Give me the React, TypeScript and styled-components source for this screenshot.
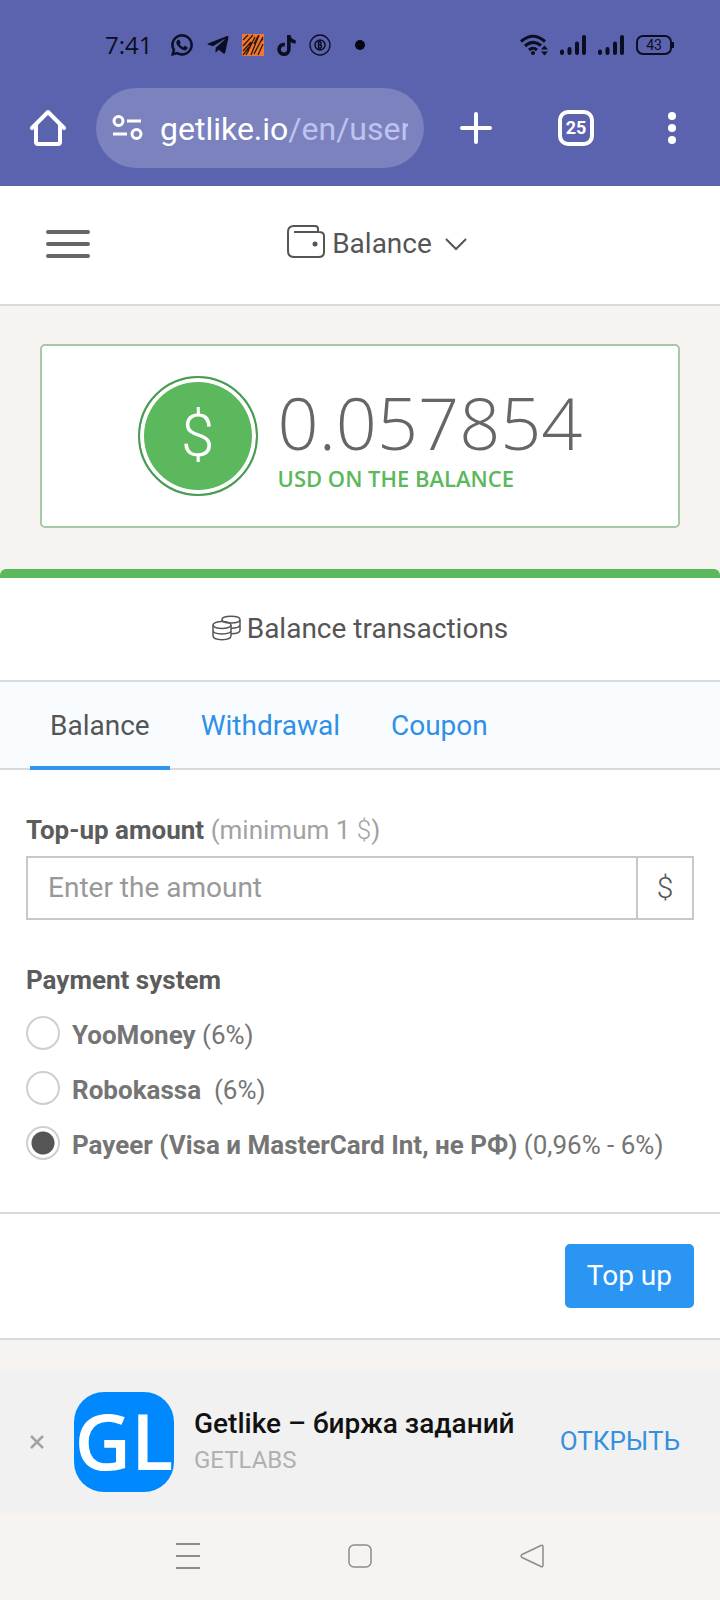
import React, { useState } from "react";
import styled, { createGlobalStyle, css } from "styled-components";
import { FaWhatsapp, FaTelegramPlane, FaTiktok } from "react-icons/fa";

const GlobalStyle = createGlobalStyle`
  *, *::before, *::after { box-sizing: border-box; }
  body {
    margin: 0;
    background: #f6f3f0;
    color: #555;
    font-family: Roboto, "Liberation Sans", sans-serif;
    font-size: 28px;
    line-height: 32px;
  }
  button, input { font: inherit; color: inherit; }
  svg { display: block; flex: none; }
`;

const PlainButton = styled.button`
  display: flex;
  align-items: center;
  justify-content: center;
  padding: 0;
  border: 0;
  background: none;
  cursor: pointer;
`;

/* Phone and browser chrome */

const Chrome = styled.div`
  background: #5b63ae;
`;

const StatusBar = styled.div`
  display: flex;
  align-items: center;
  justify-content: space-between;
  height: 88px;
  padding: 2px 46px 0 105px;
  color: #0b0d20;
`;

const StatusGroup = styled.div<{ $gap: number }>`
  display: flex;
  align-items: center;
  gap: ${(p) => p.$gap}px;
`;

const Clock = styled.time`
  margin-right: 6px;
  font-family: "Open Sans", sans-serif;
  font-size: 24px;
`;

const StatusDot = styled.span`
  width: 10px;
  height: 10px;
  margin-left: 12px;
  border-radius: 50%;
  background: #06070f;
`;

const Battery = styled.div`
  position: relative;
  width: 36px;
  height: 20px;
  margin-right: 2px;
  border: 2px solid #0b0d20;
  border-radius: 7px;
  font-size: 14px;
  line-height: 16px;
  text-align: center;

  &::after {
    content: "";
    position: absolute;
    top: 5px;
    right: -4px;
    width: 2px;
    height: 6px;
    background: #0b0d20;
  }
`;

const Toolbar = styled.div`
  display: flex;
  align-items: center;
  padding: 0 36px 18px 30px;
  color: #fff;
`;

const AddressPill = styled.div`
  display: flex;
  flex: 1;
  align-items: center;
  gap: 17px;
  min-width: 0;
  height: 80px;
  margin: 0 36px 0 30px;
  padding: 0 16px;
  border-radius: 40px;
  background: #7c82be;
`;

const Address = styled.div`
  flex: 1;
  padding-top: 2px;
  overflow: hidden;
  font-size: 32px;
  line-height: 40px;
  white-space: nowrap;
`;

const AddressPath = styled.span`
  color: #bfc3ef;
`;

const ToolbarActions = styled.div`
  display: flex;
  align-items: center;
  gap: 66px;
`;

const TabCount = styled(PlainButton)`
  width: 36px;
  height: 36px;
  border: 4px solid #fff;
  border-radius: 10px;
  color: #fff;
  font-size: 18px;
  font-weight: 700;
  line-height: 20px;
`;

/* Page */

const PageHeader = styled.header`
  display: flex;
  align-items: center;
  height: 120px;
  padding: 0 56px 2px 46px;
  border-bottom: 2px solid #dcdad8;
  background: #fff;
`;

const SectionPicker = styled(PlainButton)`
  gap: 7px;
  margin: 0 auto;
`;

const ChevronSlot = styled.span`
  padding-left: 6px;
`;

const BalanceArea = styled.section`
  padding: 38px 40px 41px;
`;

const BalanceCard = styled.div`
  display: flex;
  align-items: center;
  justify-content: center;
  gap: 20px;
  height: 184px;
  border: 2px solid #a3c9a5;
  border-radius: 5px;
  background: #fff;
`;

const Coin = styled.div`
  display: grid;
  place-items: center;
  width: 120px;
  height: 120px;
  border: 2px solid #4b9a56;
  border-radius: 50%;
  background: #5cb85c;
  box-shadow: inset 0 0 0 4px #fff;
  color: #fff;
  font-size: 60px;
  font-weight: 300;
  line-height: 60px;
`;

const BalanceFigures = styled.div`
  padding-top: 8px;
  font-family: "Open Sans", "Noto Sans", sans-serif;
`;

const Amount = styled.div`
  color: #666;
  font-size: 72px;
  font-weight: 300;
  line-height: 72px;
`;

const AmountCaption = styled.div`
  padding-top: 4px;
  color: #5cb85c;
  font-size: 22px;
  font-weight: 600;
  line-height: 32px;
`;

const Panel = styled.main`
  border-top: 9px solid #5cb85c;
  border-radius: 6px 6px 0 0;
  background: #fff;
`;

const PanelTitle = styled.h1`
  display: flex;
  align-items: center;
  justify-content: center;
  gap: 6px;
  height: 104px;
  margin: 0;
  border-bottom: 2px solid #dadada;
  font-size: 28px;
  font-weight: 400;
`;

const Tabs = styled.nav`
  display: flex;
  gap: 11px;
  height: 88px;
  padding: 0 30px;
  border-bottom: 2px solid #d8dadb;
  background: #f9fcff;
`;

const Tab = styled.a<{ $active?: boolean }>`
  height: 88px;
  padding: 0 20px;
  color: #2f90e6;
  line-height: 88px;
  text-decoration: none;
  ${(p) =>
    p.$active &&
    css`
      border-bottom: 4px solid #3095ec;
      color: #555;
    `}
`;

const Form = styled.form`
  margin: 0;
`;

const Fields = styled.div`
  padding: 44px 26px 52px;
  border-bottom: 2px solid #dadada;
  font-size: 26px;
`;

const FieldLabel = styled.label`
  display: block;
  margin-bottom: 10px;
  color: #5c5c5c;
  font-weight: 700;
`;

const Hint = styled.span`
  color: #a2a2a2;
  font-weight: 400;
`;

const Currency = styled.span`
  font-weight: 300;
`;

const InputGroup = styled.div`
  display: flex;
  height: 64px;
  border: 2px solid #c8c8c8;
  font-size: 28px;
`;

const AmountInput = styled.input`
  flex: 1;
  min-width: 0;
  padding: 0 20px;
  border: 0;
  outline: 0;
  background: none;

  &::placeholder {
    color: #999;
    opacity: 1;
  }
`;

const InputSuffix = styled.span`
  display: grid;
  place-items: center;
  width: 56px;
  border-left: 2px solid #c8c8c8;
  font-size: 30px;
  font-weight: 300;
`;

const RadioGroup = styled.fieldset`
  display: flex;
  flex-direction: column;
  gap: 21px;
  margin: 0;
  padding: 45px 0 0;
  border: 0;
`;

const Legend = styled.legend`
  float: left;
  padding: 0;
  color: #5c5c5c;
  font-weight: 700;
  line-height: 30px;
`;

const RadioRow = styled.label`
  display: flex;
  align-items: center;
  gap: 12px;
  height: 34px;
  color: #757575;
  font-size: 26px;
  white-space: pre;
`;

const Radio = styled.input`
  flex: none;
  appearance: none;
  width: 34px;
  height: 34px;
  margin: 0;
  border: 2px solid #cfcfcf;
  border-radius: 50%;
  background: #fff;

  &:checked {
    background: radial-gradient(circle, #555 0 11px, #fff 12px);
  }
`;

const RadioText = styled.span`
  padding-top: 4px;
`;

const FormActions = styled.div`
  display: flex;
  justify-content: flex-end;
  padding: 30px 26px;
  border-bottom: 2px solid #dadada;
`;

const SubmitButton = styled.button`
  height: 64px;
  padding: 0 22px;
  border: 0;
  border-radius: 5px;
  background: #2b95f3;
  color: #fff;
  cursor: pointer;
`;

/* App install banner */

const Banner = styled.aside`
  display: flex;
  align-items: center;
  height: 142px;
  margin-top: 31px;
  padding: 0 40px 0 30px;
  background: #f1f1f1;
`;

const AppIcon = styled.div`
  display: flex;
  align-items: center;
  justify-content: center;
  width: 100px;
  height: 100px;
  margin: 0 20px 0 30px;
  border-radius: 30px;
  background: #0088ff;
  color: #fff;
  font-family: "Open Sans", "Noto Sans", sans-serif;
  font-size: 78px;
  font-weight: 600;
  line-height: 96px;
  padding-bottom: 4px;
`;

const AppInfo = styled.div`
  flex: 1;
  min-width: 0;
`;

const AppName = styled.div`
  color: #111;
  font-size: 28px;
  font-weight: 500;
  line-height: 36px;
`;

const AppVendor = styled.div`
  color: #b0b0b0;
  font-size: 24px;
  line-height: 36px;
`;

const OpenLink = styled.a`
  padding-bottom: 2px;
  color: #3490e0;
  font-size: 26px;
  text-decoration: none;
`;

const SystemNav = styled.nav`
  display: flex;
  justify-content: center;
  gap: 148px;
  height: 86px;
  color: #8f8b88;
`;

const Signal = () => (
  <svg width="26" height="22" viewBox="0 0 26 22" stroke="currentColor" strokeWidth="4" strokeLinecap="round">
    <path d="M2 17.500V19M9.500 15V19M17 9.500V19M24 3V19" />
  </svg>
);

const methods = [
  { id: "yoomoney", name: "YooMoney", fee: " (6%)" },
  { id: "robokassa", name: "Robokassa", fee: "  (6%)" },
  { id: "payeer", name: "Payeer (Visa и MasterCard Int, не РФ)", fee: " (0,96% - 6%)" },
];

export default function App() {
  const [method, setMethod] = useState("payeer");
  const [amount, setAmount] = useState("");

  return (
    <>
      <GlobalStyle />
      <Chrome>
        <StatusBar>
          <StatusGroup $gap={12}>
            <Clock>7:41</Clock>
            <FaWhatsapp size={24} stroke="currentColor" strokeWidth={16} />
            <FaTelegramPlane size={24} />
            <svg width="22" height="22" viewBox="0 0 22 22">
              <rect width="22" height="22" fill="#ee7a31" />
              <path
                d="M1 6L6 1M1 12L11 1M1 17L9 8L6 18M4 21L13 3M9 21L17 1M12 20L21 3M16 21L21 10M12 10L16 2M1 21L7 13M18 8L21 5"
                stroke="#351509"
                strokeWidth="1.300"
                fill="none"
              />
            </svg>
            <FaTiktok size={21} />
            <svg width="22" height="22" viewBox="0 0 22 22" fill="none" stroke="currentColor">
              <circle cx="11" cy="11" r="10" strokeWidth="1.300" />
              <circle cx="11" cy="11" r="5" strokeWidth="1.500" />
              <path d="M9.500 8H11.500Q13 9.500 11 11Q14 12 11.500 14H9.500ZM9.500 11H12M11 6V8M11 14V16" strokeWidth="1.400" />
            </svg>
            <StatusDot />
          </StatusGroup>
          <StatusGroup $gap={12}>
            <svg width="28" height="22" viewBox="0 0 28 22" fill="none" stroke="currentColor" strokeWidth="3">
              <path d="M1 7.500Q13 -3 25 7.500M5 12Q13 5 21 11.500M9 16Q13 12.500 17 16" />
              <circle cx="13" cy="19" r="2" fill="currentColor" stroke="none" />
              <path d="M21 15.500L24.500 11.500L28 15.500ZM21 17.500L24.500 21.500L28 17.500Z" fill="currentColor" stroke="none" />
            </svg>
            <Signal />
            <Signal />
            <Battery>43</Battery>
          </StatusGroup>
        </StatusBar>
        <Toolbar>
          <PlainButton aria-label="Home">
            <svg width="36" height="38" viewBox="0 0 36 38" fill="none" stroke="#fff" strokeWidth="4" strokeLinejoin="round" strokeLinecap="round">
              <path d="M2 19L18 3L34 19M6 16V33Q6 35 8 35H28Q30 35 30 33V16" />
            </svg>
          </PlainButton>
          <AddressPill>
            <svg width="31" height="26" viewBox="0 0 31 26" fill="none" stroke="#fff" strokeWidth="3">
              <circle cx="6.500" cy="6" r="4.500" />
              <circle cx="24.500" cy="19" r="4.500" />
              <path d="M15 6H29M1 19H15" />
            </svg>
            <Address>
              getlike.io<AddressPath>/en/user</AddressPath>
            </Address>
          </AddressPill>
          <ToolbarActions>
            <PlainButton aria-label="New tab">
              <svg width="32" height="32" viewBox="0 0 32 32" stroke="#fff" strokeWidth="4" strokeLinecap="round">
                <path d="M16 2V30M2 16H30" />
              </svg>
            </PlainButton>
            <TabCount aria-label="25 open tabs">25</TabCount>
            <PlainButton aria-label="More">
              <svg width="24" height="32" viewBox="0 0 24 32" fill="#fff">
                <circle cx="12" cy="4" r="4" />
                <circle cx="12" cy="16" r="4" />
                <circle cx="12" cy="28" r="4" />
              </svg>
            </PlainButton>
          </ToolbarActions>
        </Toolbar>
      </Chrome>

      <PageHeader>
        <PlainButton aria-label="Menu">
          <svg width="44" height="28" viewBox="0 0 44 28" stroke="#666" strokeWidth="4" strokeLinecap="round">
            <path d="M2 2H42M2 14H42M2 26H42" />
          </svg>
        </PlainButton>
        <SectionPicker>
          <svg width="38" height="38" viewBox="0 0 38 38" fill="none" stroke="#555" strokeWidth="2">
            <path d="M31 7V4Q31 1 28 1H7Q1 1 1 7V26Q1 32 7 32H32Q37 32 37 27V11Q37 7 32 7H7" />
            <circle cx="28" cy="19" r="2.500" fill="#555" stroke="none" />
          </svg>
          Balance
          <ChevronSlot>
            <svg width="22" height="14" viewBox="0 0 22 14" fill="none" stroke="#555" strokeWidth="2">
              <path d="M1 2L11 12L21 2" />
            </svg>
          </ChevronSlot>
        </SectionPicker>
      </PageHeader>

      <BalanceArea>
        <BalanceCard>
          <Coin>$</Coin>
          <BalanceFigures>
            <Amount>0.057854</Amount>
            <AmountCaption>USD ON THE BALANCE</AmountCaption>
          </BalanceFigures>
        </BalanceCard>
      </BalanceArea>

      <Panel>
        <PanelTitle>
          <svg width="29" height="28" viewBox="0 0 29 28" fill="none" stroke="#555" strokeWidth="1.500">
            <ellipse cx="10" cy="10" rx="9" ry="3.500" />
            <path d="M1 10V20.500C1 26 19 26 19 20.500V10M1 15.500C1 20 19 20 19 15.500" />
            <path d="M10 6.500V4.500C10 0 28 0 28 4.500V15C28 17.500 24 18.800 19 18.800M10 4.500C10 7 15 8 19 8C24 8 28 7 28 4.500M19 13.200C24 13.200 28 12 28 9.500" />
          </svg>
          Balance transactions
        </PanelTitle>
        <Tabs>
          <Tab href="#balance" $active>Balance</Tab>
          <Tab href="#withdrawal">Withdrawal</Tab>
          <Tab href="#coupon">Coupon</Tab>
        </Tabs>
        <Form onSubmit={(e) => e.preventDefault()}>
          <Fields>
            <FieldLabel htmlFor="amount">
              Top-up amount <Hint>(minimum 1 <Currency>$</Currency>)</Hint>
            </FieldLabel>
            <InputGroup>
              <AmountInput
                id="amount"
                placeholder="Enter the amount"
                value={amount}
                onChange={(e) => setAmount(e.target.value)}
              />
              <InputSuffix>$</InputSuffix>
            </InputGroup>
            <RadioGroup>
              <Legend>Payment system</Legend>
              {methods.map((m) => (
                <RadioRow key={m.id} htmlFor={m.id}>
                  <Radio
                    type="radio"
                    name="method"
                    id={m.id}
                    checked={method === m.id}
                    onChange={() => setMethod(m.id)}
                  />
                  <RadioText>
                    <b>{m.name}</b>
                    {m.fee}
                  </RadioText>
                </RadioRow>
              ))}
            </RadioGroup>
          </Fields>
          <FormActions>
            <SubmitButton type="submit">Top up</SubmitButton>
          </FormActions>
        </Form>
      </Panel>

      <Banner>
        <PlainButton aria-label="Close">
          <svg width="14" height="14" viewBox="0 0 14 14" stroke="#a3a3a3" strokeWidth="2.500">
            <path d="M1 1L13 13M13 1L1 13" />
          </svg>
        </PlainButton>
        <AppIcon>GL</AppIcon>
        <AppInfo>
          <AppName>Getlike – биржа заданий</AppName>
          <AppVendor>GETLABS</AppVendor>
        </AppInfo>
        <OpenLink href="#open">ОТКРЫТЬ</OpenLink>
      </Banner>

      <SystemNav>
        <PlainButton aria-label="Recent apps">
          <svg width="24" height="26" viewBox="0 0 24 26" stroke="#8f8b88" strokeWidth="2">
            <path d="M0 1H24M0 13H24M0 25H24" />
          </svg>
        </PlainButton>
        <PlainButton aria-label="Home screen">
          <svg width="24" height="24" viewBox="0 0 24 24" fill="none" stroke="#8f8b88" strokeWidth="1.500">
            <rect x="1" y="1" width="22" height="22" rx="5" />
          </svg>
        </PlainButton>
        <PlainButton aria-label="Back">
          <svg width="24" height="24" viewBox="0 0 24 24" fill="none" stroke="#8f8b88" strokeWidth="1.500" strokeLinejoin="round">
            <path d="M21 1.500Q23 0.500 23 3V21Q23 23.500 21 22.500L2 13.500Q0 12 2 10.500Z" />
          </svg>
        </PlainButton>
      </SystemNav>
    </>
  );
}
